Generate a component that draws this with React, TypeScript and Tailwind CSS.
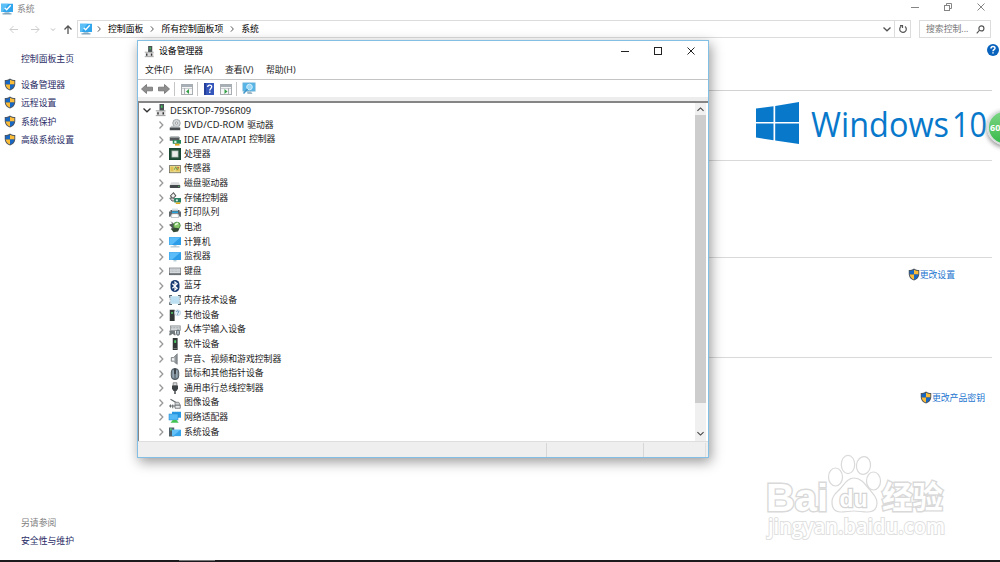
import type { ReactNode } from 'react';

const Svg = ({ children, className = 'h-3 w-3' }: { children: ReactNode; className?: string }) => (
  <svg viewBox="0 0 16 16" className={`${className} block shrink-0 overflow-visible`} fill="none">
    {children}
  </svg>
);

const Shield = ({ className = 'h-[13px] w-3' }: { className?: string }) => (
  <Svg className={className}>
    <path d="M8 0C5.8 1.4 3.4 2 1 2v5.5C1 11.5 4 14.5 8 16c4-1.500 7-4.500 7-8.500V2C12.600 2 10.200 1.400 8 0Z" fill="#4d5560" />
    <path d="M8 1.500C6.200 2.500 4.200 3.100 2.200 3.200V8H8Z" fill="#1767c4" />
    <path d="M8 1.500c1.800 1 3.800 1.600 5.800 1.700V8H8Z" fill="#fbbd38" />
    <path d="M2.200 8C2.500 11 4.700 13.400 8 14.700V8Z" fill="#fbbd38" />
    <path d="M13.800 8c-.3 3-2.500 5.400-5.800 6.700V8Z" fill="#1767c4" />
  </Svg>
);

const SystemIcon = ({ className = 'h-3 w-3' }: { className?: string }) => (
  <Svg className={className}>
    <rect x="0" y="1" width="16" height="11" fill="#2fa6ee" />
    <path d="M0 1h10L2 12H0Z" fill="#5cc0f7" />
    <path d="M5 6.500 7.500 9 13 3" stroke="#fff" strokeWidth="1.800" />
    <path d="M5 12h6l1 2.500H4Z" fill="#a9c6d8" />
    <path d="M2 14.500h12" stroke="#6d98b1" strokeWidth="1.500" />
  </Svg>
);

const DeviceIcon = ({ className = 'h-3 w-3' }: { className?: string }) => (
  <Svg className={className}>
    <rect x="6" y="0" width="6" height="9" fill="#4b5256" />
    <rect x="8" y="2" width="2" height="3" fill="#42c95b" />
    <path d="M2 9h12v7H2Z" fill="#dcdcdc" />
    <path d="M1 9h13M1 15.500h13" stroke="#8b8b8b" />
    <path d="M4 11v3M11 11v3" stroke="#333" strokeWidth="2" />
  </Svg>
);

const monitor = (
  <>
    <rect x="0" y="1.500" width="16" height="10.500" fill="#2c9de8" />
    <path d="M.5 2H15L4 11.500H.5Z" fill="#5abcf8" />
    <path d="M6 12h4v2H6Z" fill="#b6ccd9" />
  </>
);

const icons: Record<string, ReactNode> = {
  dvd: (
    <>
      <circle cx="10" cy="5.500" r="5" fill="#d4d8da" stroke="#8e9497" />
      <circle cx="10" cy="5.500" r="1.500" fill="#fff" stroke="#888" />
      <path d="M3 9h10l2 3H1Z" fill="#bfc3c5" />
      <path d="M1 11.500h14v3.500H1Z" fill="#494d50" />
    </>
  ),
  ide: (
    <>
      <path d="M1 4h13v5H1Z" fill="#54585a" />
      <path d="M2 3h11l1 2H1Z" fill="#a5aaac" />
      <path d="M5 8h11v5H5Z" fill="#258656" />
      <path d="M8 13h6v2.500H8Z" fill="#e1a91d" />
      <path d="M7 9h3v3H7Z" fill="#d7eee1" />
    </>
  ),
  cpu: (
    <>
      <rect x="1" y="1" width="14" height="14" fill="#29563f" stroke="#184731" strokeWidth="2" />
      <rect x="4" y="4" width="8" height="8" fill="#eceeec" stroke="#b9c7bd" />
    </>
  ),
  sensor: (
    <>
      <rect x=".5" y="3.500" width="15" height="9.500" fill="#e9dc8c" stroke="#66645a" />
      <path d="M2 5h4v6H2ZM9 7h5v4H9Z" fill="#e0c055" />
      <path d="m7 9 2-4 2 4 2-3" stroke="#6d9a48" strokeWidth="1.300" />
      <circle cx="12" cy="6" r="1" fill="#d23d24" />
    </>
  ),
  disk: (
    <>
      <path d="m3 7-2 4h14l-2-4Z" fill="#dadbdc" />
      <rect x="1" y="10.500" width="14" height="4" rx="1" fill="#43484a" />
      <path d="M12 12.500h2" stroke="#58ce6a" />
    </>
  ),
  storage: (
    <>
      <path d="m2 5 4-4 3 4-4 4Z" fill="#eee" stroke="#555" strokeWidth="1.400" />
      <path d="M1 8h5l3 4H4Z" fill="#d2d2d2" stroke="#555" strokeWidth="1.200" />
      <path d="M7 8h9v6H7Z" fill="#277e62" />
      <path d="M9 14h6v2H9Z" fill="#e1a91d" />
      <circle cx="10.500" cy="11" r="1.500" fill="#d5eee7" />
    </>
  ),
  printer: (
    <>
      <path d="M2 4h12v4H2Z" fill="#4e5b63" />
      <path d="M4 2h8v3H4Z" fill="#d8e1e6" />
      <path d="M0 6h16v7h-2l-1-3H3l-1 3H0Z" fill="#60676c" />
      <path d="M4 6h8v2H4Z" fill="#25a6df" />
      <path d="M4 9h8l1 5H3Z" fill="#fff" stroke="#89939a" strokeWidth=".7" />
    </>
  ),
  battery: (
    <>
      <path d="m0 5 5-2 6 5-3 4-6-1 2-2Z" fill="#535958" />
      <path d="m3 1 4 4" stroke="#333" />
      <circle cx="10.500" cy="6" r="4.500" fill="#8ac86d" stroke="#317b2e" />
      <path d="m3 11 6-2 5 1-2 4-6 1Z" fill="#354a35" />
      <path d="m8 5 4-2" stroke="#e7fbdc" strokeWidth="2" />
    </>
  ),
  computer: (
    <>
      {monitor}
      <path d="M2 14.500h12" stroke="#9db9c9" strokeWidth="1.300" />
    </>
  ),
  monitor,
  keyboard: (
    <>
      <rect x=".5" y="4" width="15" height="9" fill="#d9dcdf" stroke="#777e83" />
      <path d="M2 6.500h12M2 8.500h12" stroke="#a7adb2" strokeDasharray="1.300 .6" />
      <path d="M0 12h16" stroke="#4e5459" strokeWidth="1.700" />
    </>
  ),
  bluetooth: (
    <>
      <rect x="2" y="0" width="12" height="16" rx="6" fill="#173a72" />
      <path d="m4.500 5 6.500 6-3 2.500v-11L11 5l-6.500 6" stroke="#fff" strokeWidth="1.500" />
    </>
  ),
  memory: (
    <>
      <rect x="2" y="3" width="12" height="10" fill="#bcdff1" />
      <path d="M1 5V2h3M12 2h3v3M15 11v3h-3M4 14H1v-3" stroke="#54636b" strokeWidth="1.500" />
      <path d="M1.500 5v6M14.500 5v6" stroke="#647783" strokeDasharray="1 1" />
    </>
  ),
  other: (
    <>
      <rect x="1" y="1" width="6.500" height="15" fill="#303536" />
      <rect x="3" y="4" width="2" height="2.500" fill="#4fce65" />
      <circle cx="11.500" cy="5" r="4" fill="#e5f1f7" stroke="#bdd2df" />
      <path d="M10 4c0-2 3-2 3-.3C13 5 11.500 5 11.500 6.200m0 .8v1" stroke="#376da0" />
    </>
  ),
  human: (
    <>
      <rect x="2" y="2.500" width="13" height="6" fill="#d2d6d8" stroke="#858b8f" />
      <path d="M3 5h11" stroke="#7c8286" strokeDasharray="1 1" />
      <path d="M0 9h8v2l1 4H7l-2-2-3 2H0l1-4Z" fill="#72797d" />
      <rect x="10" y="8" width="4" height="7" rx="2" fill="#aab8c1" stroke="#434b50" />
    </>
  ),
  software: (
    <>
      <rect x="5" y="0" width="6.500" height="16" fill="#303536" />
      <rect x="7" y="3" width="2.500" height="3.500" fill="#4fce65" />
      <path d="M6 14h4.500" stroke="#8c8c8c" />
    </>
  ),
  sound: (
    <>
      <path d="M3 6h3l5-5v14l-5-4H3Z" fill="#abb0b3" stroke="#767b7e" />
      <path d="M4 7h3v3H4Z" fill="#f6f6f6" />
      <path d="M9.500 3v11" stroke="#777c80" strokeWidth="1.500" />
    </>
  ),
  mouse: (
    <>
      <rect x="3" y=".5" width="10" height="15" rx="5" fill="#6b7a85" stroke="#3c464d" />
      <path d="M5.500 3v10M10.500 3v10" stroke="#b0c4d1" strokeWidth="1.300" />
      <path d="M8 1v7" stroke="#222" strokeWidth="1.600" />
    </>
  ),
  usb: (
    <>
      <path d="M5.500 1h5v4h-5Z" fill="#d8dadb" stroke="#777" />
      <path d="M4 4.500h8V9l-2 3H6L4 9Z" fill="#3d4244" />
      <path d="M8 11v5" stroke="#454a4c" strokeWidth="2" />
    </>
  ),
  imaging: (
    <>
      <path d="m2 3 12 7" stroke="#616a6d" strokeWidth="1.500" />
      <path d="M8 7h5l2 4H8Z" fill="#cfd4d6" stroke="#777" />
      <path d="M0 12h8M5 10v5M2 10v4" stroke="#5f6668" strokeWidth="1.300" />
      <path d="M8 11h7v4H8Z" fill="#e9eaeb" stroke="#555d60" />
    </>
  ),
  network: (
    <>
      <rect x="4" y="1" width="12" height="8" fill="#2799e4" />
      <rect x="0" y="4" width="12" height="8" fill="#55b9f5" stroke="#2389cb" strokeWidth=".7" />
      <path d="M5 12h5l3 3.500H2Z" fill="#43c354" />
    </>
  ),
  system: (
    <>
      <path d="M0 2h7v12H0Z" fill="#50606a" />
      <rect x="1.500" y="3" width="2" height="3" fill="#55d477" />
      <rect x="4" y="5" width="12" height="8.500" fill="#36a6ec" />
      <path d="M4 5h11l-9 8H4Z" fill="#64c1f8" />
    </>
  ),
};

const devices: { icon: string; latin?: string; label: string }[] = [
  { icon: 'dvd', latin: 'DVD/CD-ROM', label: '驱动器' },
  { icon: 'ide', latin: 'IDE ATA/ATAPI', label: '控制器' },
  { icon: 'cpu', label: '处理器' },
  { icon: 'sensor', label: '传感器' },
  { icon: 'disk', label: '磁盘驱动器' },
  { icon: 'storage', label: '存储控制器' },
  { icon: 'printer', label: '打印队列' },
  { icon: 'battery', label: '电池' },
  { icon: 'computer', label: '计算机' },
  { icon: 'monitor', label: '监视器' },
  { icon: 'keyboard', label: '键盘' },
  { icon: 'bluetooth', label: '蓝牙' },
  { icon: 'memory', label: '内存技术设备' },
  { icon: 'other', label: '其他设备' },
  { icon: 'human', label: '人体学输入设备' },
  { icon: 'software', label: '软件设备' },
  { icon: 'sound', label: '声音、视频和游戏控制器' },
  { icon: 'mouse', label: '鼠标和其他指针设备' },
  { icon: 'usb', label: '通用串行总线控制器' },
  { icon: 'imaging', label: '图像设备' },
  { icon: 'network', label: '网络适配器' },
  { icon: 'system', label: '系统设备' },
];

const Chevron = ({ className }: { className: string }) => (
  <svg viewBox="0 0 8 8" className={`${className} block shrink-0`} fill="none" stroke="currentColor">
    <path d="m2.500.5 3.300 3.500-3.300 3.500" strokeWidth="1.300" />
  </svg>
);

const ArrowBlock = ({ className = '' }: { className?: string }) => (
  <svg viewBox="0 0 12 10" className={`${className} block h-[10px] w-3`}>
    <path d="M.5 5 5.500.5v2.700h6v3.600h-6v2.700Z" fill="#8e8e8e" stroke="#707070" strokeWidth=".8" />
  </svg>
);

const PaneIcon = ({ flip = false }: { flip?: boolean }) => (
  <svg viewBox="0 0 12 11" className="mt-px block h-[11px] w-3" fill="none">
    <rect x=".5" y=".5" width="11" height="10" fill="#f6f6f6" stroke="#a8adb1" />
    <path d="M1 2h10" stroke="#a7b0b7" strokeWidth="2" />
    <path d="M1 4.500h10" stroke="#c9cdd0" />
    <path d={flip ? 'M8.500 4v6.500' : 'M3.500 4v6.500'} stroke="#a8adb1" />
    <path d={flip ? 'm4.500 5 3 2.500-3 2.500Z' : 'M8 5 5 7.500 8 10Z'} fill="#35a047" />
  </svg>
);

function DeviceManager() {
  return (
    <section className="absolute left-[137px] top-[40px] flex h-[418px] w-[572px] flex-col border border-[#83bfe2] bg-white text-[#1c1c1c] shadow-[2px_4px_12px_rgba(0,0,0,0.4)]">
      <header className="flex h-[20px] shrink-0 items-center pl-1.5 text-black">
        <DeviceIcon className="h-[11px] w-[11px]" />
        <span className="ml-[4px] flex-1">设备管理器</span>
        <svg viewBox="0 0 76 10" className="mr-[12px] h-[10px] w-[76px]" fill="none" stroke="#222">
          <path d="M1 5.500h8M67.500 1.500l7 7m0-7-7 7" />
          <rect x="34.500" y="1.500" width="7" height="7" />
        </svg>
      </header>
      <nav className="flex h-[19px] shrink-0 items-center gap-[12px] border-b border-[#c4c4c4] pl-[7px] pt-px text-[8.850px]">
        <span className="w-[27px] whitespace-nowrap">文件(F)</span>
        <span className="w-[29px] whitespace-nowrap">操作(A)</span>
        <span className="w-[29px] whitespace-nowrap">查看(V)</span>
        <span>帮助(H)</span>
      </nav>
      <div className="flex h-[17px] shrink-0 items-center pl-[3px]">
        <ArrowBlock />
        <ArrowBlock className="ml-[5px] rotate-180" />
        <i className="ml-[4px] mr-[6px] h-[14px] w-px bg-[#c5c5c5]" />
        <PaneIcon />
        <i className="ml-[4px] mr-[6px] h-[14px] w-px bg-[#c5c5c5]" />
        <svg viewBox="0 0 10 12" className="h-3 w-[10px]" fill="none">
          <rect width="10" height="12" fill="#3456ba" />
          <path d="M0 0h2v12H0Z" fill="#233f99" />
          <path d="M3.700 4c0-2.500 4-2.500 4-.2C7.700 5.500 5.800 5.400 5.800 7.400m0 1.100v1.500" stroke="#fff" strokeWidth="1.300" />
        </svg>
        <i className="w-[6px]" />
        <PaneIcon flip />
        <i className="ml-[4px] mr-[5px] h-[14px] w-px bg-[#c5c5c5]" />
        <svg viewBox="0 0 14 13" className="h-[13px] w-[14px]" fill="none">
          <rect x="1" y="1" width="12" height="8" fill="#55b4e8" stroke="#69b2d8" />
          <path d="M5 9.500h4l1.500 2.500h-5Z" fill="#9fb8c5" />
          <circle cx="7.500" cy="5" r="2.800" fill="#9bd8f7" stroke="#d4effb" />
          <path d="m5.500 7-4 4.500" stroke="#4296c8" strokeWidth="1.500" />
        </svg>
      </div>
      <div className="h-[4px] shrink-0 bg-[#ededed]" />
      <div className="flex h-[340px] shrink-0 border-l border-t-2 border-[#858585]">
        <div className="flex-1">
          <div className="flex h-[14.640px] items-center">
            <Chevron className="ml-[4px] h-2 w-2 rotate-90 text-[#333]" />
            <DeviceIcon className="ml-[4px] h-3 w-3" />
            <span className="ml-[3px] text-[9.300px]">DESKTOP-79S6R09</span>
          </div>
          {devices.map(({ icon, latin, label }) => (
            <div key={icon} className="flex h-[14.640px] items-center">
              <Chevron className="ml-[18px] h-2 w-2 text-[#999]" />
              <Svg className="ml-[4px] h-3 w-3">{icons[icon]}</Svg>
              {latin && <span className="ml-[3px] text-[9.300px] tracking-[0.050px]">{latin}</span>}
              <span className="ml-[3px]">{label}</span>
            </div>
          ))}
        </div>
        <div className="mr-[2px] flex w-[11px] flex-col items-center bg-[#f0f0f0]">
          <span className="flex h-[12px] items-center">
            <Chevron className="h-[7px] w-[7px] -rotate-90 text-[#444]" />
          </span>
          <i className="h-[288px] w-full bg-[#cdcdcd]" />
          <span className="mt-auto flex h-[15px] items-center">
            <Chevron className="h-[7px] w-[7px] rotate-90 text-[#444]" />
          </span>
        </div>
      </div>
      <footer className="flex min-h-0 flex-1 border-t border-[#dedede] bg-[#efefef] pt-px">
        <i className="w-[409px] border-r border-[#d7d7d7]" />
        <i className="w-[97px] border-r border-[#d7d7d7]" />
        <i className="w-[62px] border-r border-[#e0e0e0]" />
      </footer>
    </section>
  );
}

const Watermark = () => (
  <svg viewBox="0 0 190 90" className="absolute left-[762px] top-[450px] h-[90px] w-[190px]" fill="#fff" stroke="#d9d9d9" strokeWidth="1.200">
    <g fontFamily="Liberation Sans, Noto Sans CJK SC, sans-serif" fontWeight="700" strokeWidth="2.800" paintOrder="stroke">
      <text x="4" y="60.500" fontSize="39" textLength="62" lengthAdjust="spacingAndGlyphs">Bai</text>
      <text x="120" y="58" fontSize="31" fontFamily="Noto Sans CJK SC, sans-serif" textLength="61" lengthAdjust="spacingAndGlyphs">经验</text>
    </g>
    <ellipse cx="73.500" cy="27" rx="7" ry="9" />
    <ellipse cx="86" cy="14.500" rx="6.700" ry="9.200" />
    <ellipse cx="101.500" cy="15.500" rx="7" ry="9" transform="rotate(8 101.500 15.500)" />
    <ellipse cx="111.500" cy="31" rx="7" ry="9" />
    <path d="M92 28c7 0 11 6 15 11 5 6 8 9 8 14 0 7-5 9-10 9-5 0-8-1-13-1s-8 1-13 1-9-3-9-10c0-6 4-9 8-13s7-11 14-11Z" />
    <text x="77.500" y="57" fontSize="24" fontWeight="700" fontFamily="Liberation Sans, sans-serif" textLength="28" lengthAdjust="spacingAndGlyphs" paintOrder="stroke" strokeWidth="2.600" stroke="#d4d4d4">du</text>
    <text x="6" y="84" fontSize="21" fontFamily="Open Sans, sans-serif" fontWeight="600" textLength="177" lengthAdjust="spacingAndGlyphs" paintOrder="stroke" strokeWidth="2" stroke="#e0e0e0">jingyan.baidu.com</text>
  </svg>
);

export default function App() {
  return (
    <main className="relative flex h-[562px] w-[1000px] flex-col overflow-hidden bg-white font-['Noto_Sans','Noto_Sans_CJK_SC',sans-serif] text-[8.850px] leading-none text-black">
      <header className="flex h-[20px] shrink-0 items-start justify-between pl-[1px]">
        <div className="flex h-[17px] items-center text-[#858585]">
          <SystemIcon />
          <span className="ml-[4px] pt-px">系统</span>
        </div>
        <svg viewBox="0 0 76 10" className="mr-[14px] mt-[2px] h-[10px] w-[76px]" fill="none" stroke="#858585">
          <path d="M1 5.500h8M67.500 1.500l7 7m0-7-7 7M36.500 3.500v-2h5v5h-2" />
          <rect x="34.500" y="3.500" width="5" height="5" />
        </svg>
      </header>
      <div className="flex h-[18px] shrink-0 items-center">
        <svg viewBox="0 0 77 12" className="h-3 w-[77px] shrink-0" fill="none">
          <path d="M18 6.500h-8m3.500-3.500L10 6.500l3.500 3.500M31 6.500h8m-3.500-3.500L39 6.500 35.500 10" stroke="#cdcdcd" />
          <path d="m51 5.500 2 2 2-2" stroke="#bcbcbc" />
          <path d="M68 11V3m-3.500 3.500L68 3l3.500 3.500" stroke="#555" strokeWidth="1.300" />
        </svg>
        <div className="flex h-full w-[834px] items-center border border-[#dcdcdc] pl-[2px]">
          <SystemIcon className="mb-px h-3 w-3" />
          <Chevron className="ml-[4px] mr-[6px] h-[6px] w-[6px] text-[#555]" />
          控制面板
          <Chevron className="mx-[6px] h-[6px] w-[6px] text-[#555]" />
          所有控制面板项
          <Chevron className="mx-[6px] h-[6px] w-[6px] text-[#555]" />
          系统
          <Chevron className="ml-auto mr-[3px] h-2 w-2 rotate-90 text-[#555]" />
          <span className="flex h-full w-[16px] items-center justify-center border-l border-[#dcdcdc]">
            <svg viewBox="0 0 10 10" className="h-[10px] w-[10px]" fill="none" stroke="#555" strokeWidth="1.200">
              <path d="M7 2.500A3.300 3.300 0 1 1 3.300 2.300M2 1.500h2.500V4" />
            </svg>
          </span>
        </div>
        <div className="ml-[8px] flex h-full w-[72px] items-center border border-[#dcdcdc] pl-[6px] text-[#777]">
          搜索控制...
          <svg viewBox="0 0 10 10" className="ml-auto mr-[5px] h-[9px] w-[9px]" fill="none" stroke="#555" strokeWidth="1.300">
            <circle cx="6" cy="3.800" r="2.800" />
            <path d="M4 5.800.800 9.200" />
          </svg>
        </div>
      </div>
      <div className="flex min-h-0 flex-1">
        <aside className="flex w-[137px] shrink-0 flex-col text-[#292c66]">
          <span className="ml-[21px] mt-[16.500px]">控制面板主页</span>
          <ul className="mt-[12px]">
            {['设备管理器', '远程设置', '系统保护', '高级系统设置'].map((label) => (
              <li key={label} className="flex h-[18.300px] items-center pl-[4px]">
                <Shield />
                <span className="ml-[5px] pt-[2px]">{label}</span>
              </li>
            ))}
          </ul>
          <div className="mb-[14px] ml-[21px] mt-auto flex flex-col gap-[9px]">
            <span className="text-[#808080]">另请参阅</span>
            <span>安全性与维护</span>
          </div>
        </aside>
        <div className="mr-[8px] flex flex-1 flex-col text-[#1c74cf]">
          <div className="h-[53px] shrink-0 border-b border-[#d2d2d2]" />
          <div className="flex h-[70px] shrink-0 items-start justify-end border-b border-[#d9d9d9]">
            <svg viewBox="0 0 236 52" className="mt-[7px] h-[52px] w-[236px]" fill="#0878cb">
              <path d="m0 10.500 17.500-2.200V24H0ZM19.200 8 43 4v20H19.200ZM0 25.500h17.500v16.700L0 39.500ZM19.200 25.500H43V46l-23.800-3.500Z" />
              <g fontFamily="Open Sans, sans-serif" fontSize="35.500">
                <text x="55" y="38.500" textLength="138" lengthAdjust="spacingAndGlyphs">Windows</text>
                <text x="196" y="38.500" textLength="35" lengthAdjust="spacingAndGlyphs">10</text>
              </g>
            </svg>
          </div>
          <div className="h-[97px] shrink-0 border-b border-[#d9d9d9]" />
          <div className="flex h-[100px] shrink-0 items-start justify-end border-b border-[#d9d9d9] pr-[37px] pt-[10px]">
            <a className="flex items-center">
              <Shield />
              <span className="pt-[2px]">更改设置</span>
            </a>
          </div>
          <div className="flex justify-end pr-[7px] pt-[33px]">
            <a className="flex items-center">
              <Shield />
              <span className="pt-px">更改产品密钥</span>
            </a>
          </div>
        </div>
      </div>
      <footer className="flex h-[2px] shrink-0 bg-[#1d1a1e]">
        <i className="ml-[179px] h-px w-[36px] bg-[#777]" />
      </footer>
      <DeviceManager />
      <svg viewBox="0 0 12 12" className="absolute left-[987px] top-[44px] h-3 w-3" fill="none">
        <circle cx="6" cy="6" r="6" fill="#0963bd" />
        <path d="M4 4.500c0-2.600 4-2.600 4-.3C8 5.700 6 5.700 6 7.300m0 1v1.300" stroke="#fff" strokeWidth="1.500" />
      </svg>
      <span className="absolute left-[987px] top-[110px] flex h-[35px] w-[35px] items-center rounded-full border-2 border-[#d9dddd] bg-linear-to-b from-[#79d582] to-[#35ba4b] pl-px font-['Noto_Sans'] text-[9px] font-bold text-white shadow-[0_2px_5px_#888]">
        60
      </span>
      <Watermark />
    </main>
  );
}
